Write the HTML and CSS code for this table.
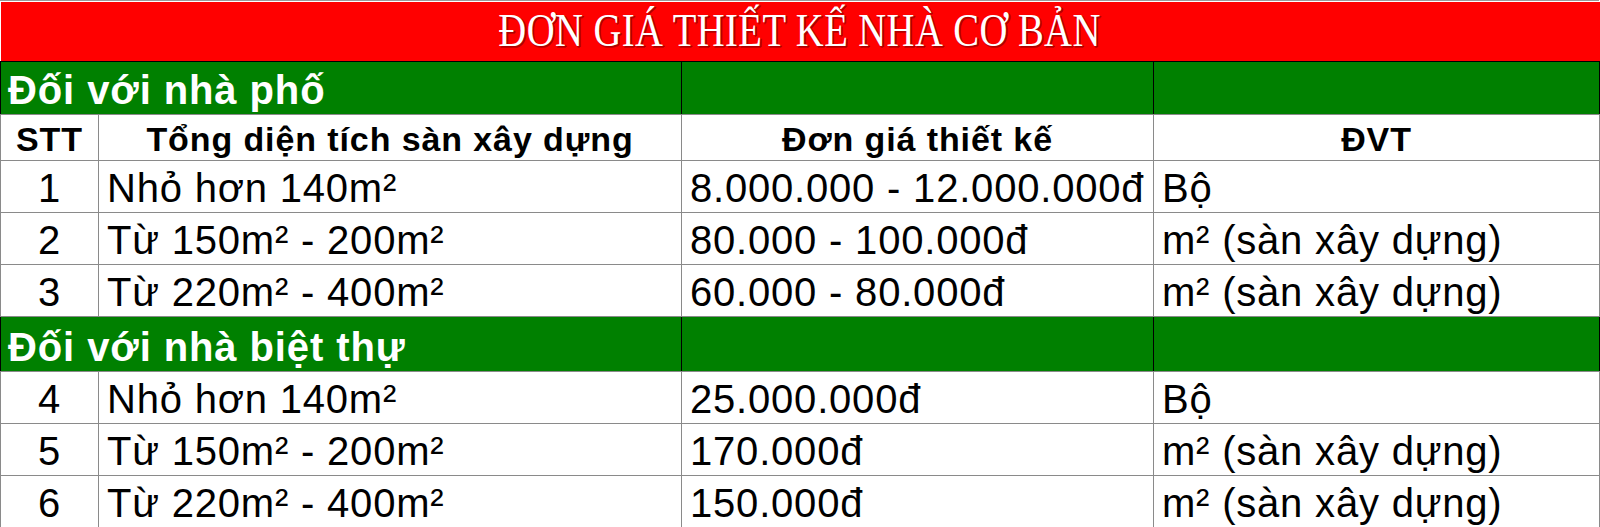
FILE: index.html
```html
<!DOCTYPE html>
<html lang="vi">
<head>
<meta charset="utf-8">
<title>Đơn giá thiết kế nhà cơ bản</title>
<link rel="stylesheet" href="styles.css">
</head>
<body>
<div class="topline"></div>
<table class="price">
  <colgroup>
    <col class="c1"><col class="c2"><col class="c3"><col class="c4">
  </colgroup>
  <tr class="title-row"><td colspan="4"><span class="title">ĐƠN GIÁ THIẾT KẾ NHÀ CƠ BẢN</span></td></tr>
  <tr class="group"><td colspan="2">Đối với nhà phố</td><td></td><td></td></tr>
  <tr class="head"><td>STT</td><td>Tổng diện tích sàn xây dựng</td><td>Đơn giá thiết kế</td><td>ĐVT</td></tr>
  <tr class="row"><td class="num">1</td><td>Nhỏ hơn 140m²</td><td>8.000.000 - 12.000.000đ</td><td>Bộ</td></tr>
  <tr class="row"><td class="num">2</td><td>Từ 150m² - 200m²</td><td>80.000 - 100.000đ</td><td>m² (sàn xây dựng)</td></tr>
  <tr class="row"><td class="num">3</td><td>Từ 220m² - 400m²</td><td>60.000 - 80.000đ</td><td>m² (sàn xây dựng)</td></tr>
  <tr class="group g2"><td colspan="2">Đối với nhà biệt thự</td><td></td><td></td></tr>
  <tr class="row"><td class="num">4</td><td>Nhỏ hơn 140m²</td><td>25.000.000đ</td><td>Bộ</td></tr>
  <tr class="row"><td class="num">5</td><td>Từ 150m² - 200m²</td><td>170.000đ</td><td>m² (sàn xây dựng)</td></tr>
  <tr class="row"><td class="num">6</td><td>Từ 220m² - 400m²</td><td>150.000đ</td><td>m² (sàn xây dựng)</td></tr>
  <tr class="tail"><td></td><td></td><td></td><td></td></tr>
</table>
</body>
</html>
```
FILE: styles.css
```css
html, body {
  margin: 0;
  padding: 0;
  background: #fff;
}
body {
  font-family: "Liberation Sans", Arial, sans-serif;
  color: #000;
}
.topline {
  width: 1599px;
  height: 1px;
  border-top: 1px solid #9a9a9a;
  box-sizing: border-box;
  margin-bottom: 1px;
}
.price {
  border-collapse: collapse;
  table-layout: fixed;
  width: 1599px;
}
.c1 { width: 98px; }
.c2 { width: 583px; }
.c3 { width: 472px; }
.c4 { width: 446px; }

.price td {
  border: 1px solid #8a8a8a;
  padding: 0 8px;
  white-space: nowrap;
  overflow: hidden;
  box-sizing: border-box;
}

.title-row td {
  background: #ff0000;
  height: 59px;
  text-align: center;
  border: none;
  border-bottom: 1px solid #000;
  padding: 0;
  vertical-align: middle;
}
.title {
  display: inline-block;
  font-family: "Liberation Serif", "Times New Roman", serif;
  font-size: 46px;
  line-height: 50px;
  color: #fff;
  transform: scaleX(0.84);
  text-shadow: 2px 1px 0 #b00000, 1px 2px 0 #c80000;
  letter-spacing: 0.5px;
}

.group td {
  background: #008000;
  color: #fff;
  font-weight: bold;
  font-size: 40px;
  letter-spacing: 0.9px;
  height: 53px;
  padding: 0 0 0 7px;
  border-color: #000;
  border-top-color: #8a8a8a;
  border-bottom-color: #8a8a8a;
  vertical-align: bottom;
  line-height: 48px;
}
.g2 td { height: 55px; }

.head td {
  font-weight: bold;
  font-size: 34px;
  letter-spacing: 0.9px;
  text-align: center;
  height: 46px;
  line-height: 42px;
  vertical-align: bottom;
}

.row td {
  font-size: 40px;
  letter-spacing: 0.8px;
  height: 52px;
  line-height: 47px;
  vertical-align: bottom;
}
.row td.num { text-align: center; padding: 0; }

.tail td {
  height: 5px;
  border-color: #d8d8d8;
  border-bottom: none;
  border-top-color: #8a8a8a;
}
```
